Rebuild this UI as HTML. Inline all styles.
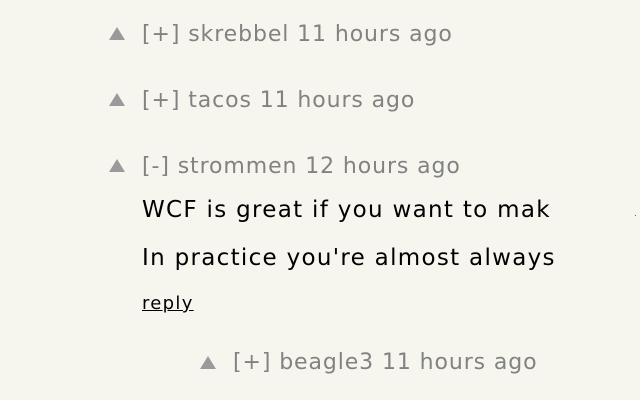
<!DOCTYPE html>
<html><head><style>
body{margin:0;width:640px;height:400px;background:#f6f6ef;overflow:hidden;position:relative;font-family:"DejaVu Sans",Verdana,sans-serif}
.t{position:absolute;white-space:nowrap;line-height:1}
.m{color:#828282;font-size:22px;letter-spacing:0.9px}
.c{color:#000;font-size:23px;letter-spacing:1.3px}
.tri{position:absolute;width:0;height:0;border-left:8px solid transparent;border-right:8px solid transparent;border-bottom:13px solid #9a9a9a}
</style></head><body>
<div class="tri" style="left:109px;top:27px"></div>
<div class="t m" style="left:142px;top:24px">[+] skrebbel 11 hours ago</div>
<div class="tri" style="left:109px;top:93px"></div>
<div class="t m" style="left:142px;top:90px">[+] tacos 11 hours ago</div>
<div class="tri" style="left:109px;top:159px"></div>
<div class="t m" style="left:142px;top:156px">[-] strommen 12 hours ago</div>
<div class="t c" style="left:142px;top:199px">WCF is great if you want to mak</div>
<div class="t c" style="left:142px;top:247px">In practice you're almost always</div>
<div class="t" style="left:142px;top:295px;font-size:18px;letter-spacing:1.3px;color:#000;text-decoration:underline">reply</div>
<div style="position:absolute;left:635px;top:215px;width:1px;height:1px;background:#666"></div>
<div class="tri" style="left:200px;top:356px"></div>
<div class="t m" style="left:233px;top:352px">[+] beagle3 11 hours ago</div>
</body></html>
